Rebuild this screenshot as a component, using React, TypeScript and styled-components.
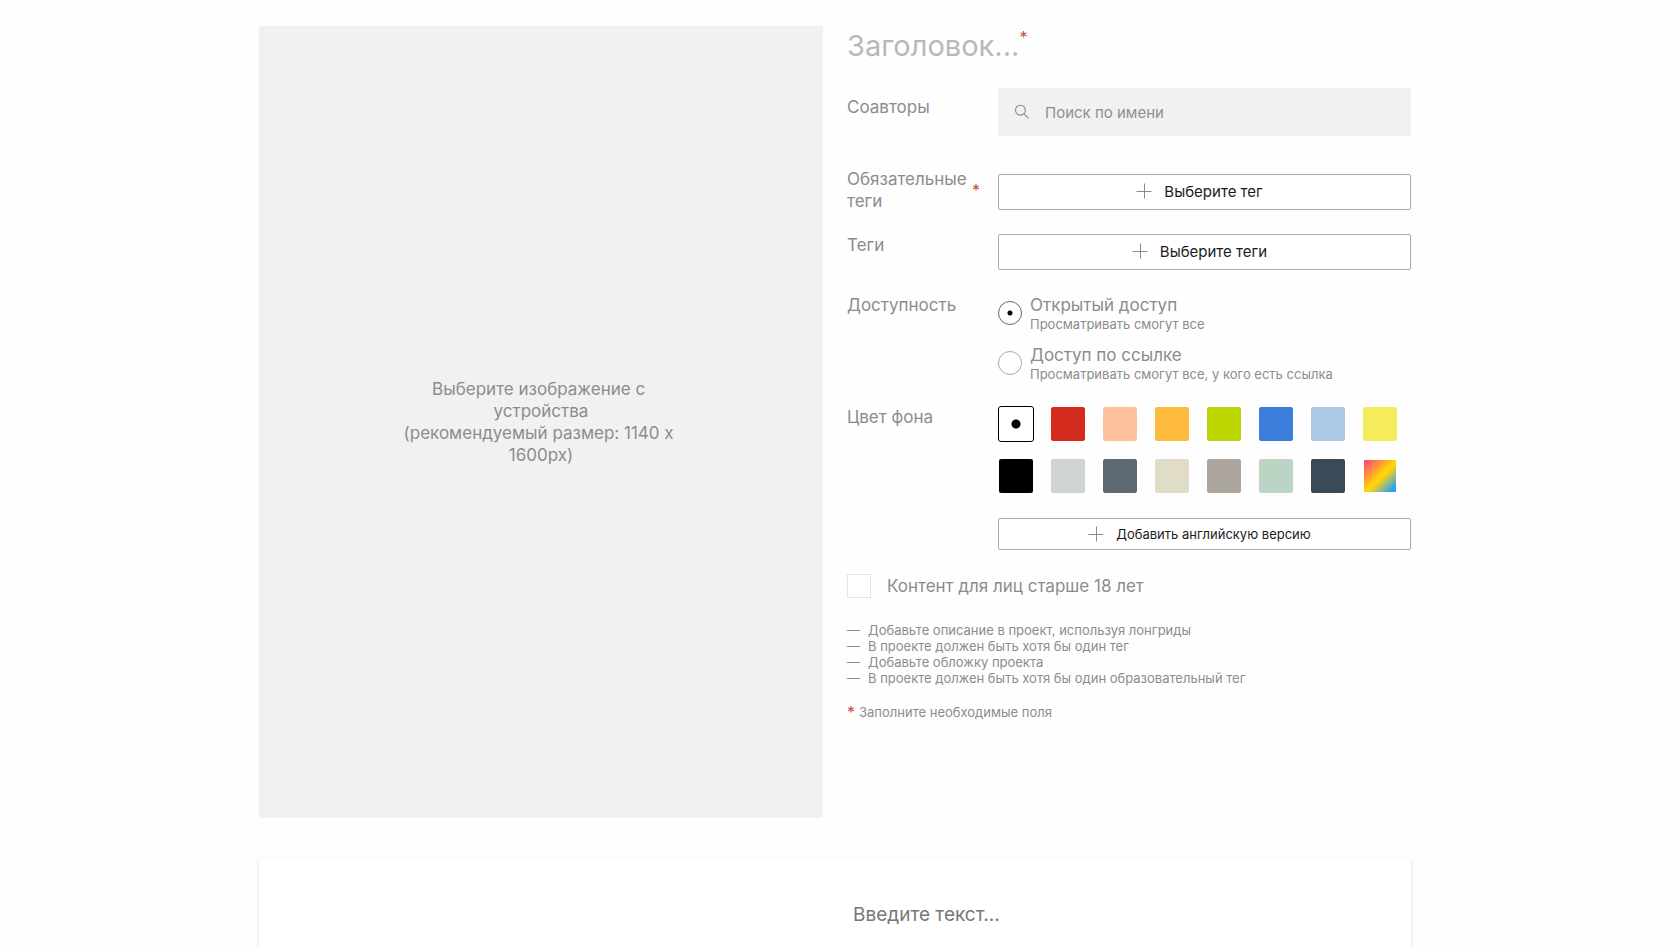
import React, { useState } from "react";
import styled, { createGlobalStyle } from "styled-components";

const GlobalStyle = createGlobalStyle`
  *, *::before, *::after { box-sizing: border-box; }
  body {
    margin: 0;
    background: #fefefe;
    color: #8c8c8c;
    font-family: Inter, "Liberation Sans", sans-serif;
    font-size: 17px;
    line-height: 22px;
  }
  input, textarea, button { font-family: inherit; }
`;

const Page = styled.div`
  display: flex;
  flex-direction: column;
  align-items: center;
  min-height: 100vh;
  padding: 26px 10px 0 0;
`;

const Project = styled.main`
  display: grid;
  grid-template-columns: 1fr 1fr;
  align-items: start;
  gap: 24px;
  width: 100%;
  max-width: 1152px;
`;

const Cover = styled.button`
  display: flex;
  align-items: center;
  justify-content: center;
  width: 100%;
  aspect-ratio: 1140 / 1600;
  padding: 0;
  border: 0;
  border-radius: 2px;
  background: #f1f1f1;
  color: #8c8c8c;
  font-size: 17px;
  line-height: 22px;
  cursor: pointer;
`;

const CoverText = styled.span`
  width: 50%;
  white-space: break-spaces;
`;

const Form = styled.form`
  display: flex;
  flex-direction: column;
`;

const TitleRow = styled.div`
  display: flex;
  align-items: flex-start;
  height: 62px;
`;

const TitleInput = styled.input`
  field-sizing: content;
  height: 38px;
  padding: 0;
  border: 0;
  outline: 0;
  background: none;
  color: #222;
  font-size: 29px;
  &::placeholder { color: #b8b8b8; opacity: 1; }
`;

const Star = styled.span`
  color: #c0504a;
  font-size: 16px;
  line-height: 22px;
`;

const Row = styled.div<{ $end?: number }>`
  display: grid;
  grid-template-columns: 151px 1fr;
  align-items: start;
  margin-bottom: ${(p) => p.$end ?? 24}px;
`;

const Label = styled.label<{ $top?: number }>`
  display: flex;
  align-items: center;
  gap: 4px;
  padding-top: ${(p) => p.$top ?? 0}px;
`;

const LabelText = styled.span`
  max-width: 121px;
`;

const Search = styled.div`
  display: flex;
  align-items: center;
  gap: 15px;
  height: 48px;
  padding: 0 16px;
  background: #f1f1f1;
`;

const SearchInput = styled.input`
  flex: 1;
  min-width: 0;
  padding: 0;
  border: 0;
  outline: 0;
  background: none;
  font-size: 15px;
  &::placeholder { color: #8f8f8f; opacity: 1; }
`;

const PickButton = styled.button<{ $small?: boolean; $top?: number }>`
  display: flex;
  align-items: center;
  justify-content: center;
  gap: 12px;
  width: 100%;
  height: ${(p) => (p.$small ? 32 : 36)}px;
  margin-top: ${(p) => p.$top ?? 0}px;
  padding: ${(p) => (p.$small ? "0 10px 0 0" : "0 10px 2px 0")};
  border: 1px solid #aaa;
  border-radius: 2px;
  background: #fff;
  color: #1c1c1c;
  font-size: ${(p) => (p.$small ? 13 : 15)}px;
  cursor: pointer;
`;

const Options = styled.div`
  display: flex;
  flex-direction: column;
  gap: 12px;
`;

const Option = styled.label`
  display: flex;
  align-items: center;
  gap: 8px;
`;

const Radio = styled.input`
  appearance: none;
  flex: none;
  width: 24px;
  height: 24px;
  margin: 0;
  border: 1px solid #a8a8a8;
  border-radius: 50%;
  background: #fff;
  &:checked {
    border-color: #666;
    background: radial-gradient(circle, #000 2px, #fff 3px);
  }
`;

const OptionText = styled.span`
  display: flex;
  flex-direction: column;
`;

const Hint = styled.small`
  font-size: 13px;
  line-height: 16px;
`;

const Swatches = styled.div`
  display: grid;
  grid-template-columns: repeat(auto-fill, 36px);
  gap: 16px;
`;

const Swatch = styled.input<{ $fill: string; $inset?: number }>`
  appearance: none;
  width: 36px;
  height: 36px;
  margin: 0;
  border: ${(p) => p.$inset ?? 1}px solid transparent;
  border-radius: 3px;
  background: ${(p) => p.$fill} padding-box;
  cursor: pointer;
  &:checked {
    border: 1px solid #000;
    background: radial-gradient(circle, #000 4px, transparent 5px), ${(p) => p.$fill};
  }
`;

const AdultRow = styled.label`
  display: flex;
  align-items: center;
  gap: 16px;
  margin-bottom: 24px;
`;

const Tick = styled.input`
  appearance: none;
  width: 24px;
  height: 24px;
  margin: 0;
  border: 1px solid #e4e4e4;
  background: #fff;
  &:checked { background: #8f8f8f; }
`;

const Notes = styled.ul`
  margin: 0 0 18px;
  padding: 0;
  list-style: none;
  font-size: 13px;
  line-height: 16px;
`;

const Note = styled.li`
  display: flex;
  gap: 8px;
  &::before { content: "—"; }
`;

const Required = styled.p`
  display: flex;
  align-items: center;
  gap: 4px;
  margin: 0;
  font-size: 13px;
  line-height: 16px;

  ${Star} { line-height: 16px; }
`;

const Editor = styled.section`
  display: grid;
  grid-template-columns: 1fr 1fr;
  flex: 1;
  width: 100%;
  max-width: 1152px;
  margin-top: 40px;
  padding-top: 44px;
  background: #fff;
  box-shadow: 0 2px 4px rgba(0, 0, 0, 0.14);
`;

const EditorText = styled.textarea`
  grid-column: 2;
  height: 44px;
  padding: 0 18px;
  border: 0;
  outline: 0;
  resize: none;
  background: none;
  font-size: 19px;
  line-height: 26px;
  &::placeholder { color: #777; opacity: 1; }
`;

const PlusIcon = () => (
  <svg width="16" height="16" viewBox="0 0 16 16" fill="none" stroke="#8a8a8a" aria-hidden="true">
    <path d="M8.5 0.5v15M0.5 8.5h15" />
  </svg>
);

const SearchIcon = () => (
  <svg width="16" height="16" viewBox="0 0 16 16" fill="none" stroke="#8a8a8a" strokeWidth="1.1" aria-hidden="true">
    <circle cx="6.4" cy="6.2" r="4.9" />
    <path d="M10 9.8l4.6 4.6" />
  </svg>
);

const colors = [
  { name: "Белый", fill: "#fff" },
  { name: "Красный", fill: "#d52b1e" },
  { name: "Персиковый", fill: "#ffc09c" },
  { name: "Оранжевый", fill: "#ffbb3d" },
  { name: "Салатовый", fill: "#bdd600" },
  { name: "Синий", fill: "#3b7ddb" },
  { name: "Голубой", fill: "#abc9e6" },
  { name: "Жёлтый", fill: "#f4ec5a" },
  { name: "Чёрный", fill: "#000" },
  { name: "Светло-серый", fill: "#d0d3d3" },
  { name: "Серый", fill: "#5e6972" },
  { name: "Бежевый", fill: "#e1dcc8" },
  { name: "Серо-коричневый", fill: "#ada69f" },
  { name: "Мятный", fill: "#bbd4c3" },
  { name: "Тёмно-синий", fill: "#394a59" },
  { name: "Другой", fill: "linear-gradient(135deg, #ff3d7f 0%, #ffd20a 50%, #ffd20a 56%, #1fa2ff 92%)", inset: 2 },
];

const accessOptions = [
  { title: "Открытый доступ", hint: "Просматривать смогут все" },
  { title: "Доступ по ссылке", hint: "Просматривать смогут все, у кого есть ссылка" },
];

const notes = [
  "Добавьте описание в проект, используя лонгриды",
  "В проекте должен быть хотя бы один тег",
  "Добавьте обложку проекта",
  "В проекте должен быть хотя бы один образовательный тег",
];

export default function App() {
  const [access, setAccess] = useState(0);
  const [color, setColor] = useState(0);

  return (
    <Page>
      <GlobalStyle />
      <Project>
        <Cover type="button">
          <CoverText>
            Выберите изображение с устройства
            <br />
            (рекомендуемый размер: 1140 x 1600px)
          </CoverText>
        </Cover>
        <Form>
          <TitleRow>
            <TitleInput aria-label="Заголовок" placeholder="Заголовок..." />
            <Star>*</Star>
          </TitleRow>
          <Row $end={32}>
            <Label htmlFor="coauthors" $top={8}>Соавторы</Label>
            <Search>
              <SearchIcon />
              <SearchInput id="coauthors" placeholder="Поиск по имени" />
            </Search>
          </Row>
          <Row $end={22}>
            <Label htmlFor="required-tags">
              <LabelText>Обязательные теги</LabelText>
              <Star>*</Star>
            </Label>
            <PickButton id="required-tags" type="button" $top={6}>
              <PlusIcon />
              Выберите тег
            </PickButton>
          </Row>
          <Row>
            <Label htmlFor="tags">Теги</Label>
            <PickButton id="tags" type="button">
              <PlusIcon />
              Выберите теги
            </PickButton>
          </Row>
          <Row>
            <Label as="span" id="access-label">Доступность</Label>
            <Options role="radiogroup" aria-labelledby="access-label">
              {accessOptions.map((o, i) => (
                <Option key={o.title}>
                  <Radio type="radio" name="access" checked={access === i} onChange={() => setAccess(i)} />
                  <OptionText>
                    {o.title}
                    <Hint>{o.hint}</Hint>
                  </OptionText>
                </Option>
              ))}
            </Options>
          </Row>
          <Row>
            <Label as="span" id="color-label">Цвет фона</Label>
            <Swatches role="radiogroup" aria-labelledby="color-label">
              {colors.map((c, i) => (
                <Swatch
                  key={c.name}
                  type="radio"
                  name="color"
                  aria-label={c.name}
                  $fill={c.fill}
                  $inset={c.inset}
                  checked={color === i}
                  onChange={() => setColor(i)}
                />
              ))}
            </Swatches>
          </Row>
          <Row>
            <span />
            <PickButton type="button" $small>
              <PlusIcon />
              Добавить английскую версию
            </PickButton>
          </Row>
          <AdultRow>
            <Tick type="checkbox" />
            Контент для лиц старше 18 лет
          </AdultRow>
          <Notes>
            {notes.map((n) => (
              <Note key={n}>{n}</Note>
            ))}
          </Notes>
          <Required>
            <Star>*</Star>
            Заполните необходимые поля
          </Required>
        </Form>
      </Project>
      <Editor>
        <EditorText aria-label="Текст" placeholder="Введите текст..." />
      </Editor>
    </Page>
  );
}
